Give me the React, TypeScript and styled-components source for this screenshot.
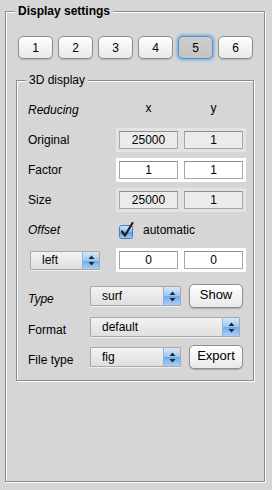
import React, { useState } from "react";
import styled, { createGlobalStyle } from "styled-components";

const Global = createGlobalStyle`
  html, body {
    margin: 0;
    padding: 0;
    background: #d6d6d6;
  }
  body {
    font-family: "Liberation Sans", Arial, sans-serif;
    font-size: 12px;
    color: #111;
  }
`;

const Page = styled.div`
  width: 272px;
  height: 490px;
  overflow: hidden;
  background: #d6d6d6;
  padding-top: 11px;
  box-sizing: border-box;
`;

// etched frame: grey line with a white line beside it
const Frame = styled.div<{ $w: number; $h: number; $ml: number }>`
  position: relative;
  box-sizing: border-box;
  width: ${(p) => p.$w}px;
  height: ${(p) => p.$h}px;
  margin-left: ${(p) => p.$ml}px;
  border: 1px solid #8c8c8c;
  box-shadow: inset 1px 1px 0 #fff, 1px 1px 0 #fff;
`;

const Legend = styled.span<{ $bold?: boolean; $left: number }>`
  position: absolute;
  top: -8px;
  left: ${(p) => p.$left}px;
  padding: 0 3px;
  line-height: 14px;
  background: #d6d6d6;
  font-weight: ${(p) => (p.$bold ? 700 : 400)};
  color: #000;
`;

const OuterBody = styled.div`
  padding: 24px 0 0 12px;
`;

const TabRow = styled.div`
  display: flex;
  gap: 5px;
  margin-bottom: 21px;
`;

const TabButton = styled.button<{ $active?: boolean }>`
  width: 35px;
  height: 23px;
  padding: 0;
  border-radius: 5px;
  font-family: inherit;
  font-size: 12px;
  color: #000;
  cursor: pointer;
  border: 1px solid ${(p) => (p.$active ? "#5b8fc4" : "#8f8f8f")};
  background: ${(p) =>
    p.$active
      ? "linear-gradient(#cdcdcd, #c4c4c4)"
      : "linear-gradient(#ffffff, #f3f3f3 50%, #eaeaea)"};
  box-shadow: ${(p) =>
    p.$active
      ? "0 0 0 1px #8fbbe6, 0 0 2px 2px rgba(100,160,225,0.55)"
      : "0 1px 1px rgba(0,0,0,0.18)"};
`;

const InnerBody = styled.div`
  display: flex;
  flex-direction: column;
  padding: 17px 0 0 11px;
`;

const Row = styled.div<{ $mt?: number }>`
  display: flex;
  align-items: center;
  height: 24px;
  margin-top: ${(p) => p.$mt ?? 6}px;
`;

const Label = styled.span<{ $w: number; $italic?: boolean; $dy?: number }>`
  width: ${(p) => p.$w}px;
  flex: none;
  padding-top: ${(p) => p.$dy ?? 0}px;
  font-style: ${(p) => (p.$italic ? "italic" : "normal")};
  color: #000;
  white-space: nowrap;
`;

const FieldGroup = styled.div<{ $tone?: "white" | "grey" | "none"; $ml?: number }>`
  display: flex;
  gap: 6px;
  box-sizing: border-box;
  width: 130px;
  height: 24px;
  padding: 3px;
  margin-left: ${(p) => p.$ml ?? 0}px;
  background: ${(p) =>
    p.$tone === "white" ? "#ffffff" : p.$tone === "grey" ? "#e3e3e3" : "transparent"};
`;

const Field = styled.div<{ $disabled?: boolean }>`
  flex: 1;
  box-sizing: border-box;
  height: 18px;
  display: flex;
  align-items: center;
  justify-content: center;
  border: 1px solid #a6a6a6;
  border-top-color: #8e8e8e;
  background: ${(p) => (p.$disabled ? "#ebebeb" : "#ffffff")};
  color: #000;
`;

const HeadCell = styled.div`
  flex: 1;
  text-align: center;
  color: #000;
`;

const CheckWrap = styled.label`
  display: flex;
  align-items: center;
  gap: 8px;
  padding-left: 3px;
  color: #000;
  cursor: pointer;
`;

const Popup = styled.div<{ $w: number; $h?: number; $ml?: number }>`
  display: flex;
  align-items: center;
  box-sizing: border-box;
  width: ${(p) => p.$w}px;
  height: ${(p) => p.$h ?? 20}px;
  margin-left: ${(p) => p.$ml ?? 0}px;
  border: 1px solid #a8a8a8;
  border-radius: 1px;
  background: linear-gradient(#f3f3f3, #e9e9e9 50%, #dfdfdf);
  box-shadow: 0 1px 0 rgba(255, 255, 255, 0.6);
`;

const PopupText = styled.span`
  flex: 1;
  padding-left: 11px;
  color: #000;
`;

const PopupArrows = styled.span`
  width: 16px;
  align-self: stretch;
  display: flex;
  align-items: center;
  justify-content: center;
  border-left: 1px solid #8fb3d9;
  background: linear-gradient(#d7e8f8, #9cc6ef 50%, #6eaaea 51%, #a9d0f5);
`;

const PushButton = styled.button`
  width: 54px;
  height: 24px;
  margin-left: 8px;
  padding: 0 0 3px;
  border-radius: 5px;
  border: 1px solid #8f8f8f;
  background: linear-gradient(#ffffff, #f4f4f4 50%, #e9e9e9);
  box-shadow: 0 1px 1px rgba(0, 0, 0, 0.2);
  font-family: inherit;
  font-size: 13px;
  color: #000;
  cursor: pointer;
`;

function Arrows() {
  return (
    <PopupArrows>
      <svg width="7" height="11" viewBox="0 0 7 11">
        <path d="M3.5 0.5 L6.5 4 L0.5 4 Z" fill="#1b2a3a" />
        <path d="M3.5 10.5 L6.5 7 L0.5 7 Z" fill="#1b2a3a" />
      </svg>
    </PopupArrows>
  );
}

function CheckBox({ checked }: { checked: boolean }) {
  return (
    <svg width="16" height="17" viewBox="0 0 16 17">
      <defs>
        <linearGradient id="cbg" x1="0" y1="0" x2="0" y2="1">
          <stop offset="0" stopColor="#d4e6f8" />
          <stop offset="0.5" stopColor="#8fbdec" />
          <stop offset="0.55" stopColor="#5d9de3" />
          <stop offset="1" stopColor="#a8d2f7" />
        </linearGradient>
      </defs>
      <rect x="0.5" y="3.5" width="13" height="13" rx="2" fill="url(#cbg)" stroke="#4f7cae" />
      {checked && (
        <path
          d="M3 9.5 L6 13.5 L13.5 1"
          fill="none"
          stroke="#14202e"
          strokeWidth="2.2"
          strokeLinecap="round"
          strokeLinejoin="round"
        />
      )}
    </svg>
  );
}

export default function App() {
  const [tab, setTab] = useState(5);
  const [auto, setAuto] = useState(true);

  return (
    <>
      <Global />
      <Page>
        <Frame $w={260} $h={471} $ml={5}>
          <Legend $bold $left={9}>Display settings</Legend>
          <OuterBody>
            <TabRow>
              {[1, 2, 3, 4, 5, 6].map((n) => (
                <TabButton key={n} $active={n === tab} onClick={() => setTab(n)}>
                  {n}
                </TabButton>
              ))}
            </TabRow>

            <Frame $w={238} $h={301} $ml={-2}>
              <Legend $left={9}>3D display</Legend>
              <InnerBody>
                <Row $mt={0}>
                  <Label $w={88} $italic>Reducing</Label>
                  <FieldGroup $tone="none">
                    <HeadCell>x</HeadCell>
                    <HeadCell>y</HeadCell>
                  </FieldGroup>
                </Row>
                <Row>
                  <Label $w={88}>Original</Label>
                  <FieldGroup $tone="grey">
                    <Field $disabled>25000</Field>
                    <Field $disabled>1</Field>
                  </FieldGroup>
                </Row>
                <Row>
                  <Label $w={88}>Factor</Label>
                  <FieldGroup $tone="white">
                    <Field>1</Field>
                    <Field>1</Field>
                  </FieldGroup>
                </Row>
                <Row>
                  <Label $w={88}>Size</Label>
                  <FieldGroup $tone="grey">
                    <Field $disabled>25000</Field>
                    <Field $disabled>1</Field>
                  </FieldGroup>
                </Row>
                <Row>
                  <Label $w={88} $italic>Offset</Label>
                  <CheckWrap onClick={() => setAuto(!auto)}>
                    <CheckBox checked={auto} />
                    automatic
                  </CheckWrap>
                </Row>
                <Row>
                  <Popup $w={70} $h={19} $ml={2}>
                    <PopupText>left</PopupText>
                    <Arrows />
                  </Popup>
                  <FieldGroup $tone="white" $ml={16}>
                    <Field>0</Field>
                    <Field>0</Field>
                  </FieldGroup>
                </Row>
                <Row $mt={12}>
                  <Label $w={62} $italic $dy={6}>Type</Label>
                  <Popup $w={91}>
                    <PopupText>surf</PopupText>
                    <Arrows />
                  </Popup>
                  <PushButton>Show</PushButton>
                </Row>
                <Row $mt={7}>
                  <Label $w={62} $dy={5}>Format</Label>
                  <Popup $w={150}>
                    <PopupText>default</PopupText>
                    <Arrows />
                  </Popup>
                </Row>
                <Row>
                  <Label $w={62} $dy={5}>File type</Label>
                  <Popup $w={91}>
                    <PopupText>fig</PopupText>
                    <Arrows />
                  </Popup>
                  <PushButton>Export</PushButton>
                </Row>
              </InnerBody>
            </Frame>
          </OuterBody>
        </Frame>
      </Page>
    </>
  );
}
